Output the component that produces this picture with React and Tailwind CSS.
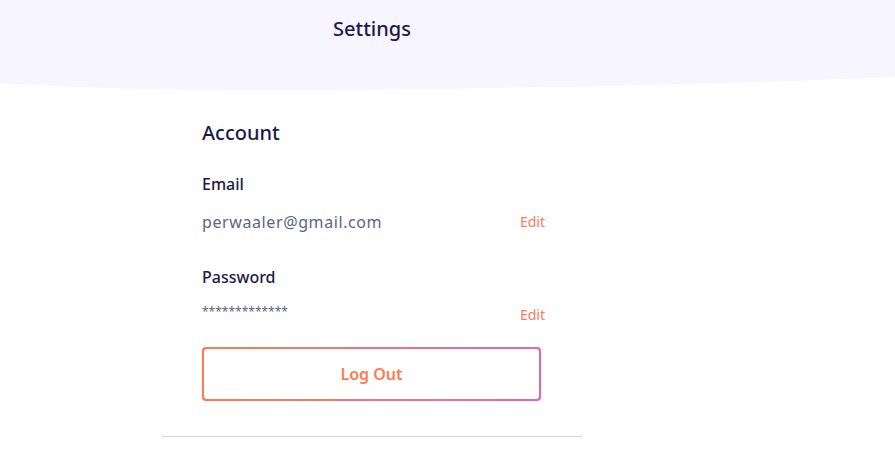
import React from "react";

export default function App() {
  return (
    <div className="min-h-screen bg-white font-['Noto_Sans',sans-serif] text-[#1d1a4a]">
      {/* header */}
      <div className="relative">
        <div className="h-[77px] bg-[#f7f5ff] flex">
          <div className="w-[420px] ml-[162px] pt-[14px] text-center text-[20px] font-medium">
            Settings
          </div>
        </div>
        <svg className="block w-full h-[14px]" viewBox="0 0 895 14" preserveAspectRatio="none">
          <path d="M0 0 H895 V0 C700 8 450 13 260 13 C150 13 60 10 0 6 Z" fill="#f7f5ff" />
        </svg>
      </div>

      <div className="w-[420px] ml-[162px]">
        <div className="px-[40px] pt-[28px] pb-[35px]">
          <h2 className="text-[20px] leading-[28px] font-medium">Account</h2>

          <div className="mt-[26px] text-[16px] leading-[22px] font-medium">Email</div>
          <div className="mt-[16px] flex items-center justify-between">
            <span className="text-[16px] leading-[22px] text-[#5c6486] tracking-[0.6px]">
              perwaaler@gmail.com
            </span>
            <button className="text-[14px] leading-[20px] text-[#ff7a59] mr-[-3px]">Edit</button>
          </div>

          <div className="mt-[33px] text-[16px] leading-[22px] font-medium">Password</div>
          <div className="mt-[16px] flex items-start justify-between">
            <span className="text-[12px] leading-[16px] text-[#5c6486]">*************</span>
            <button className="mt-[1px] text-[14px] leading-[20px] text-[#ff7a59] mr-[-3px]">Edit</button>
          </div>

          <div className="mt-[22px] w-[339px] h-[54px] rounded-[4px] p-[2px] bg-gradient-to-r from-[#ff7a52] to-[#e06aa6]">
            <button className="w-full h-full rounded-[3px] bg-white text-[16px] font-semibold text-[#ff7a52]">
              Log Out
            </button>
          </div>
        </div>
        <div className="h-px bg-[#d6d6de]" />
      </div>
    </div>
  );
}
